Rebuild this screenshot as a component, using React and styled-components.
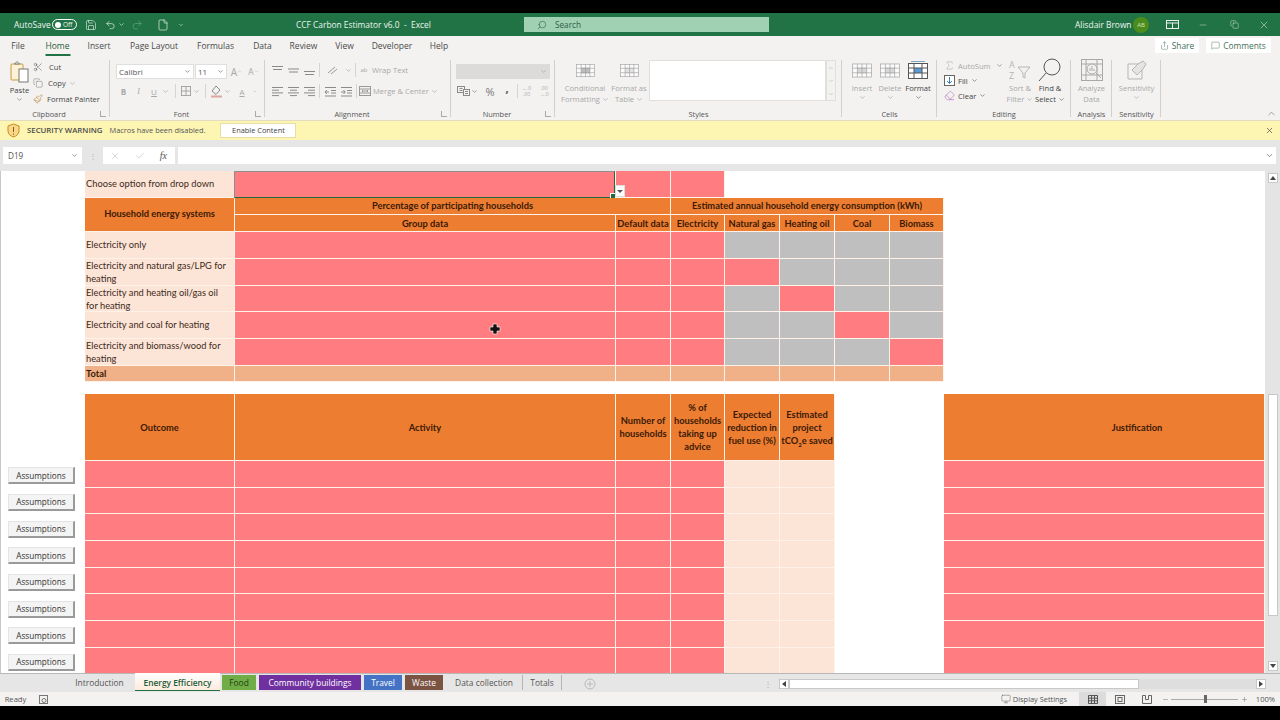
import React from "react";
import styled, { createGlobalStyle } from "styled-components";
import {
  Save, Undo2, Redo2, File, Search, Scissors, Copy, Paintbrush, X, Check, ChevronDown, ChevronUp,
  Minus, Plus, MessageSquare, Share, Sigma, Monitor, Eraser,
} from "lucide-react";

const ORANGE = "#ed7d31";
const PINK = "#ff7c80";
const PEACH = "#fce4d6";
const GREY = "#bfbfbf";
const TOTAL = "#f0b088";
const MUTED = "#a8a8a8";

const Global = createGlobalStyle`
  html, body { margin: 0; padding: 0; background: #000; }
  body { font-family: "Open Sans", "Liberation Sans", sans-serif; overflow: hidden; }
  * { box-sizing: border-box; }
`;

const Frame = styled.div`
  width: 1280px;
  height: 720px;
  padding: 13px 0 14px;
  display: flex;
  flex-direction: column;
  overflow: hidden;
`;

/* title bar */
const TitleBar = styled.div`
  height: 23px;
  background: #217346;
  color: #eef5f0;
  font-size: 8.4px;
  display: flex;
  align-items: center;
  position: relative;
  flex: none;
  white-space: nowrap;
`;
const TitleSlot = styled.div`
  width: ${(p) => p.$w}px;
  flex: none;
  display: flex;
  align-items: center;
  justify-content: ${(p) => p.$align || "center"};
  opacity: ${(p) => (p.$dim ? 0.35 : 1)};
`;
const Toggle = styled.div`
  width: 25px;
  height: 11px;
  border: 1px solid #fff;
  border-radius: 6px;
  font-size: 6.5px;
  display: flex;
  align-items: center;
  padding-left: 2px;
  gap: 2px;
  &::before {
    content: "";
    width: 6px;
    height: 6px;
    border-radius: 50%;
    background: #fff;
  }
`;
const SearchBox = styled.div`
  width: 245px;
  height: 15px;
  background: #a0d1b2;
  color: #2f5f45;
  display: flex;
  align-items: center;
  gap: 8px;
  padding-left: 13px;
  font-size: 8.2px;
`;
const Avatar = styled.div`
  width: 16px;
  height: 16px;
  border-radius: 50%;
  background: #4c8c1c;
  color: #cfe3bd;
  font-size: 6px;
  display: flex;
  align-items: center;
  justify-content: center;
`;

/* ribbon tabs */
const TabRow = styled.div`
  height: 21px;
  background: #f3f2f1;
  display: flex;
  align-items: center;
  flex: none;
  font-size: 8.5px;
  color: #444;
`;
const RibbonTab = styled.div`
  width: ${(p) => p.$w}px;
  flex: none;
  height: 21px;
  display: flex;
  align-items: center;
  justify-content: center;
  padding-bottom: 2px;
  position: relative;
  color: ${(p) => (p.$on ? "#1f5c3a" : "#4a4a4a")};
  &::after {
    content: "";
    display: ${(p) => (p.$on ? "block" : "none")};
    position: absolute;
    left: 50%;
    transform: translateX(-50%);
    bottom: 1px;
    width: 25px;
    height: 2px;
    background: #217346;
  }
`;
const ShareBtn = styled.div`
  height: 15px;
  width: ${(p) => p.$w}px;
  background: #fff;
  margin-left: ${(p) => p.$ml || 0}px;
  margin-bottom: 2px;
  display: flex;
  align-items: center;
  justify-content: center;
  gap: 3px;
  color: #3f6f55;
  font-size: 8.4px;
`;

/* ribbon */
const Ribbon = styled.div`
  height: 64px;
  background: #f3f2f1;
  display: flex;
  flex: none;
  position: relative;
  border-bottom: 1px solid #e3dcc0;
  font-size: 7.6px;
  color: ${MUTED};
  white-space: nowrap;
`;
const Group = styled.div`
  width: ${(p) => p.$w}px;
  flex: none;
  height: 64px;
  display: flex;
  flex-direction: column;
  position: relative;
  &::after {
    content: "";
    position: absolute;
    right: 0;
    top: 3px;
    bottom: 4px;
    width: 1px;
    background: #d2d0ce;
  }
`;
const GroupBody = styled.div`
  height: 50px;
  display: flex;
  padding-left: ${(p) => p.$pl || 0}px;
  padding-top: ${(p) => p.$pt || 0}px;
`;
const GroupLabel = styled.div`
  height: 13px;
  font-size: 7.4px;
  color: #555;
  display: flex;
  align-items: center;
  justify-content: center;
  position: relative;
  padding-right: ${(p) => p.$pr || 0}px;
`;
const Launcher = styled.span`
  position: absolute;
  right: 4px;
  top: 4px;
  width: 6px;
  height: 6px;
  border-left: 1px solid #aaa;
  border-bottom: 1px solid #aaa;
`;
const Stack = styled.div`
  display: flex;
  flex-direction: column;
  gap: ${(p) => p.$gap || 0}px;
  width: ${(p) => (p.$w ? `${p.$w}px` : "auto")};
  padding-top: ${(p) => p.$pt || 0}px;
  flex: none;
`;
const Row = styled.div`
  display: flex;
  align-items: center;
  height: ${(p) => p.$h || 16}px;
  gap: ${(p) => p.$gap || 0}px;
  color: ${(p) => p.$color || "inherit"};
`;
const Slot = styled.div`
  width: ${(p) => p.$w}px;
  flex: none;
  align-self: center;
  display: flex;
  align-items: center;
  justify-content: center;
  white-space: nowrap;
  font-weight: ${(p) => (p.$bold ? 700 : 400)};
  font-family: ${(p) => (p.$serif ? '"Liberation Serif", serif' : "inherit")};
  font-style: ${(p) => (p.$italic ? "italic" : "normal")};
  text-decoration: ${(p) => (p.$under ? "underline" : "none")};
  font-size: ${(p) => p.$fs || 8}px;
  color: ${(p) => p.$color || "inherit"};
`;
const Comma = styled.span`
  transform: translateY(-4px);
`;
const VRule = styled.div`
  width: 1px;
  height: 14px;
  background: #d6d4d2;
  flex: none;
`;
const Select = styled.div`
  width: ${(p) => p.$w}px;
  height: 15px;
  background: ${(p) => p.$bg || "#fff"};
  border: 1px solid ${(p) => p.$bg || "#e1dfdd"};
  color: #555;
  font-size: 8px;
  display: flex;
  align-items: center;
  justify-content: space-between;
  padding: 0 2px;
  margin-right: 1px;
`;
const Large = styled.div`
  width: ${(p) => p.$w}px;
  flex: none;
  display: flex;
  flex-direction: column;
  align-items: center;
  color: ${(p) => (p.$on ? "#444" : MUTED)};
  line-height: 11px;
  font-size: 7.6px;
  text-align: center;
`;
const LargeIcon = styled.div`
  height: 26px;
  display: flex;
  align-items: center;
  justify-content: center;
`;
const Line = styled.div`
  height: 11px;
  display: flex;
  align-items: center;
  justify-content: center;
  gap: 2px;
`;
const Gallery = styled.div`
  width: 177px;
  height: 41px;
  background: #fff;
  border: 1px solid #e1dfdd;
  margin-top: 3px;
  margin-left: -2px;
  flex: none;
`;
const GalleryBtns = styled.div`
  width: 10px;
  height: 41px;
  margin-top: 3px;
  border: 1px solid #e1dfdd;
  display: flex;
  flex-direction: column;
  align-items: center;
  justify-content: space-around;
  color: #aaa;
`;
const Decimal = styled.div`
  display: flex;
  flex-direction: column;
  font-size: 5px;
  line-height: 6px;
  text-align: center;
`;
const Collapse = styled.div`
  position: absolute;
  right: 3px;
  bottom: 1px;
  color: #666;
  display: flex;
`;

/* warning bar */
const Warning = styled.div`
  height: 19px;
  background: #fdf6b3;
  display: flex;
  align-items: center;
  padding: 0 6px 1px 7px;
  flex: none;
  font-size: 7.4px;
  color: #555;
`;
const WarnBold = styled.span`
  font-weight: 600;
  font-size: 7.8px;
  margin: 0 7px 0 7px;
  color: #4a4a4a;
`;
const EnableBtn = styled.div`
  width: 76px;
  height: 15px;
  margin-left: 15px;
  background: #fff;
  border: 1px solid #e6dfa8;
  display: flex;
  align-items: center;
  justify-content: center;
  color: #444;
`;
const WarnClose = styled.div`
  margin-left: auto;
  display: flex;
`;

/* formula bar */
const FormulaBar = styled.div`
  height: 31px;
  background: #e6e6e6;
  flex: none;
  display: flex;
  align-items: flex-start;
  padding: 7px 4px 0 3px;
  font-size: 8.2px;
  color: #555;
`;
const NameBox = styled.div`
  width: 79px;
  height: 17px;
  background: #fff;
  display: flex;
  align-items: center;
  justify-content: space-between;
  padding: 0 4px 0 5px;
`;
const Grip = styled.div`
  width: 21px;
  height: 17px;
  display: flex;
  align-items: center;
  justify-content: center;
  color: #aaa;
  font-size: 8px;
`;
const FxBox = styled.div`
  width: 72px;
  height: 17px;
  background: #fff;
  display: flex;
  align-items: center;
  justify-content: space-between;
  color: #aaa;
  padding: 0 8px 0 7px;
  margin-right: 3px;
`;
const FxText = styled.span`
  font-family: "Liberation Serif", serif;
  font-style: italic;
  color: #555;
  font-size: 10px;
`;
const FormulaInput = styled.div`
  flex: 1;
  height: 17px;
  background: #fff;
  display: flex;
  align-items: center;
  justify-content: flex-end;
  padding-right: 2px;
  color: #666;
`;

/* sheet */
const SheetWrap = styled.div`
  height: 502px;
  flex: none;
  background: #fff;
  display: flex;
  overflow: hidden;
  position: relative;
  box-shadow: inset 1px 0 #c8c8c8;
`;
const Grid = styled.div`
  width: 1265px;
  flex: none;
  display: grid;
  grid-template-columns: 85px 150px 381px 55px 54px 55px 55px 55px 54px 0 321px;
  grid-template-rows: 27px 17px 17px 27px 27px 26px 27px 27px 16px 12px 67px repeat(8, 26.67px);
  font-family: Lato, "Liberation Sans", sans-serif;
  font-size: 9.3px;
  line-height: 13px;
  color: #3c2a20;
`;
const tones = { orange: ORANGE, pink: PINK, peach: PEACH, grey: GREY, total: TOTAL, none: "transparent" };
const Cell = styled.div`
  grid-column: span ${(p) => p.$span || 1};
  grid-row: span ${(p) => p.$rows || 1};
  background: ${(p) => tones[p.$tone || "none"]};
  border-right: 1px solid ${(p) => (p.$tone && p.$tone !== "none" ? "#fff2e9" : "transparent")};
  border-bottom: 1px solid ${(p) => (p.$tone && p.$tone !== "none" ? "#fff2e9" : "transparent")};
  display: flex;
  align-items: center;
  justify-content: ${(p) => (p.$left ? "flex-start" : "center")};
  text-align: ${(p) => (p.$left ? "left" : "center")};
  padding-left: ${(p) => p.$pl || (p.$left ? 1 : 0)}px;
  padding-right: ${(p) => (p.$left ? 6 : 0)}px;
  padding-bottom: ${(p) => p.$pb || 0}px;
  font-weight: ${(p) => (p.$bold ? 700 : 400)};
  color: ${(p) => (p.$bold ? "#3a1a06" : "inherit")};
  position: relative;
  min-width: 0;
`;
const Spacer = styled.div`
  grid-column: 1 / -1;
`;
const Selection = styled.div`
  position: absolute;
  inset: 0 0 -1px -1px;
  border: 1px solid #1f6b40;
  border-left-color: #8e8e8e;
  border-top-color: #8e8e8e;
  &::after {
    content: "";
    position: absolute;
    right: -2px;
    bottom: -2px;
    width: 4px;
    height: 4px;
    background: #1f6b40;
    border: 1px solid #fff;
  }
`;
const DropBtn = styled.div`
  position: absolute;
  right: -11px;
  bottom: 0;
  width: 10px;
  height: 12px;
  background: #fff;
  border: 1px solid #ddd;
  display: flex;
  align-items: center;
  justify-content: center;
  z-index: 2;
  &::after {
    content: "";
    border-left: 3px solid transparent;
    border-right: 3px solid transparent;
    border-top: 3px solid #555;
  }
`;
const AssumeBtn = styled.div`
  width: 67px;
  height: 17px;
  margin: 4px 0 0 7px;
  background: #f4f4f4;
  border: 1px solid #e4e4e4;
  border-right: 2px solid #9a9a9a;
  border-bottom: 2px solid #9a9a9a;
  font-family: "Open Sans", sans-serif;
  font-size: 8.2px;
  color: #333;
  display: flex;
  align-items: center;
  justify-content: center;
`;
const Cursor = styled.svg`
  position: absolute;
  left: 489px;
  top: 152px;
`;
const VScroll = styled.div`
  width: 15px;
  flex: none;
  background: #e4e4e4;
  display: flex;
  flex-direction: column;
  justify-content: space-between;
  align-items: center;
  padding: 2px 0;
  position: relative;
`;
const ScrollBtn = styled.div`
  width: ${(p) => p.$w || 10}px;
  height: ${(p) => p.$h || 10}px;
  background: #fff;
  border: 1px solid #c8c8c8;
  display: flex;
  align-items: center;
  justify-content: center;
  flex: none;
  &::after {
    content: "";
    ${(p) => p.$dir === "up" && "border-left:3px solid transparent;border-right:3px solid transparent;border-bottom:4px solid #444;"}
    ${(p) => p.$dir === "down" && "border-left:3px solid transparent;border-right:3px solid transparent;border-top:4px solid #444;"}
    ${(p) => p.$dir === "left" && "border-top:3px solid transparent;border-bottom:3px solid transparent;border-right:4px solid #444;"}
    ${(p) => p.$dir === "right" && "border-top:3px solid transparent;border-bottom:3px solid transparent;border-left:4px solid #444;"}
  }
`;
const VThumb = styled.div`
  position: absolute;
  left: 3px;
  top: 223px;
  width: 10px;
  height: 222px;
  background: #fff;
  border: 1px solid #c8c8c8;
`;

/* sheet tabs */
const SheetTabs = styled.div`
  height: 19px;
  background: #e6e6e6;
  border-top: 1px solid #b8b8b8;
  flex: none;
  display: flex;
  align-items: flex-start;
  padding-top: 1px;
  font-size: 8.4px;
  color: #555;
`;
const SheetTab = styled.div`
  width: ${(p) => p.$w}px;
  margin-right: ${(p) => p.$mr ?? 3}px;
  margin-top: ${(p) => (p.$on ? -2 : 0)}px;
  height: ${(p) => (p.$on ? 18 : 15)}px;
  padding-top: ${(p) => (p.$on ? 1 : 0)}px;
  flex: none;
  display: flex;
  align-items: center;
  justify-content: center;
  background: ${(p) => (p.$on ? "linear-gradient(#fff, #fdeadd)" : p.$bg || "transparent")};
  color: ${(p) => (p.$on ? "#1d5c36" : p.$bg ? p.$fg || "#fff" : "#555")};
  font-weight: ${(p) => (p.$on ? 600 : 400)};
  border-bottom: ${(p) => (p.$on ? "1px solid #217346" : "none")};
  border-right: ${(p) => (p.$rule ? "1px solid #b5b5b5" : "none")};
`;
const HScroll = styled.div`
  width: 487px;
  height: 10px;
  align-self: center;
  display: flex;
  align-items: center;
  background: #dedede;
  position: relative;
`;
const HThumb = styled.div`
  width: 350px;
  height: 10px;
  background: #fff;
  border: 1px solid #c8c8c8;
`;
const HFill = styled.div`
  flex: 1;
`;

/* status bar */
const StatusBar = styled.div`
  height: 14px;
  background: #f3f2f1;
  flex: none;
  display: flex;
  align-items: center;
  font-size: 7.6px;
  color: #555;
`;
const ViewBtn = styled.div`
  width: 27px;
  height: 14px;
  flex: none;
  background: ${(p) => (p.$on ? "#dcdcdc" : "transparent")};
  display: flex;
  align-items: center;
  justify-content: center;
`;
const ZoomTrack = styled.div`
  width: 67px;
  height: 1px;
  background: #aaa;
  position: relative;
  flex: none;
`;
const ZoomKnob = styled.div`
  position: absolute;
  left: 33px;
  top: -4px;
  width: 3px;
  height: 8px;
  background: #666;
`;

/* small drawings */
const Caret = ({ color = "#999" }) => <ChevronDown size={7} color={color} strokeWidth={2} />;

const Lines = ({ kind = "left", color = "#8a8a8a" }) => {
  const sets = {
    left: [[1, 12], [1, 8], [1, 12], [1, 8]],
    center: [[1, 12], [3, 10], [1, 12], [3, 10]],
    right: [[1, 12], [5, 12], [1, 12], [5, 12]],
  };
  return (
    <svg width="13" height="11" viewBox="0 0 13 11" stroke={color} strokeWidth="1">
      {sets[kind].map(([a, b], i) => <line key={i} x1={a} x2={b} y1={1.5 + i * 2.7} y2={1.5 + i * 2.7} />)}
    </svg>
  );
};
const VLines = ({ top }) => (
  <svg width="13" height="11" viewBox="0 0 13 11" stroke="#8a8a8a">
    <line x1="1" x2="12" y1={top} y2={top} />
    <line x1="2" x2="11" y1={top + 3} y2={top + 3} />
  </svg>
);
const Indent = ({ flip }) => (
  <svg width="13" height="11" viewBox="0 0 13 11" stroke="#8a8a8a" fill="none">
    <path d="M1 1.5h11M7 4.5h5M7 7h5M1 10h11" />
    <path d={flip ? "M1 6h4M3.5 4l1.8 2-1.8 2" : "M5 6H1M2.8 4L1 6l1.8 2"} />
  </svg>
);
const SheetGlyph = ({ w = 26, h = 18, fill = "#cfcfcf", color = "#9a9a9a" }) => (
  <svg width={w} height={h} viewBox="0 0 26 18" fill="none" stroke={color} strokeWidth="0.8">
    <rect x="0.5" y="0.5" width="25" height="17" fill="#fafafa" />
    <rect x="7" y="5" width="12" height="8" fill={fill} stroke="none" />
    <path d="M0.5 6h25M0.5 12h25M7 0.5v17M13 0.5v17M19 0.5v17" />
  </svg>
);
const PasteIcon = () => (
  <svg width="20" height="24" viewBox="0 0 20 24" fill="none">
    <rect x="1" y="4" width="12" height="16" rx="1" fill="#fdf1d6" stroke="#c89b3c" />
    <path d="M4.5 4L7 1.5 9.5 4z" fill="#fff" stroke="#777" />
    <rect x="9" y="9" width="9" height="13" fill="#fff" stroke="#777" />
  </svg>
);
const Merge = () => (
  <svg width="12" height="10" viewBox="0 0 12 10" fill="none" stroke="#999">
    <rect x="0.5" y="0.5" width="11" height="9" />
    <path d="M0.5 3h11M0.5 7h11M3 5h6M3 5l1-1M3 5l1 1M9 5L8 4M9 5L8 6" />
  </svg>
);
const Borders = () => (
  <svg width="12" height="12" viewBox="0 0 12 12" fill="none" stroke="#9a9a9a">
    <rect x="0.5" y="0.5" width="11" height="11" />
    <path d="M6 0.5v11M0.5 6h11" />
  </svg>
);
const FillColor = () => (
  <svg width="13" height="13" viewBox="0 0 13 13" fill="none" stroke="#8a8a8a">
    <path d="M6 1L2 6l4 3.5L10 5z" />
    <rect x="1" y="10.5" width="11" height="2" fill="#d9a8a0" stroke="none" />
  </svg>
);
const Accounting = () => (
  <svg width="13" height="10" viewBox="0 0 13 10" fill="none" stroke="#8a8a8a">
    <rect x="0.5" y="0.5" width="7" height="6" />
    <rect x="6.5" y="3.5" width="6" height="6" fill="#f3f2f1" />
    <path d="M2.5 2.5h3M2.5 4.5h3M8 5.5h3M8 7.5h3" />
  </svg>
);
const Shield = () => (
  <svg width="13" height="15" viewBox="0 0 13 15">
    <path d="M6.5 1L12 3v5c0 3-2.5 5-5.5 6C3.5 13 1 11 1 8V3z" fill="#fbd78b" stroke="#c98a1a" />
    <path d="M6.5 4v5M6.5 10.5v1.2" stroke="#8a5a10" />
  </svg>
);
const Cross = () => (
  <svg width="13" height="9" viewBox="0 0 13 9" fill="none" stroke="#e8f1ec">
    <rect x="0.5" y="0.5" width="12" height="8" />
    <path d="M0.5 3h12M6.5 3v5.5" />
  </svg>
);
const ArrowSort = () => (
  <svg width="24" height="24" viewBox="0 0 24 24" fill="none" stroke="#b5b5b5">
    <path d="M10 9h12l-5 6v5l-2-1v-4z" />
    <text x="1" y="10" fontSize="9" fill="#b5b5b5" stroke="none">A</text>
    <text x="1" y="21" fontSize="9" fill="#b5b5b5" stroke="none">Z</text>
  </svg>
);
const Magnifier = () => (
  <svg width="24" height="24" viewBox="0 0 24 24" fill="none" stroke="#555">
    <circle cx="14" cy="9" r="8" />
    <path d="M8 15L1 23" />
  </svg>
);
const FormatGlyph = () => (
  <svg width="20" height="18" viewBox="0 0 20 18" fill="none" stroke="#555">
    <rect x="0.5" y="2.5" width="19" height="15" fill="#fff" />
    <rect x="6" y="7" width="8" height="5" fill="#5b9bd5" stroke="none" />
    <path d="M0.5 7h19M0.5 12h19M6 2.5v15M14 2.5v15" />
    <path d="M3 0.5h14" stroke="#7ba7c9" />
  </svg>
);
const AnalyzeGlyph = () => (
  <svg width="22" height="22" viewBox="0 0 22 22" fill="none" stroke="#a8a8a8">
    <rect x="0.5" y="0.5" width="21" height="21" />
    <path d="M0.5 5h21M0.5 16h21M5 0.5v21M16 0.5v21" />
    <circle cx="11" cy="10" r="5" fill="#f3f2f1" />
    <path d="M9 12V9M11 12V7M13 12v-2M15 14l5 5" />
  </svg>
);
const SensGlyph = () => (
  <svg width="20" height="20" viewBox="0 0 20 20" fill="none" stroke="#b5b5b5">
    <path d="M1 4h14v15H1z" />
    <path d="M5 10l6-6 5-3 3 3-3 5-6 6z" fill="#e4e4e4" />
  </svg>
);

const energy = [
  { label: "Electricity only", pink: -1 },
  { label: "Electricity and natural gas/LPG for heating", pink: 0 },
  { label: "Electricity and heating oil/gas oil for heating", pink: 1 },
  { label: "Electricity and coal for heating", pink: 2 },
  { label: "Electricity and biomass/wood for heating", pink: 3 },
];
const tabs = [
  ["File", 36], ["Home", 43, true], ["Insert", 40], ["Page Layout", 70], ["Formulas", 53], ["Data", 41],
  ["Review", 41], ["View", 41], ["Developer", 54], ["Help", 40],
];
const colored = [
  { name: "Food", w: 34, bg: "#70ad47", fg: "#1f3d10" },
  { name: "Community buildings", w: 102, bg: "#7030a0" },
  { name: "Travel", w: 38, bg: "#4472c4" },
  { name: "Waste", w: 38, bg: "#7a5343" },
];

const App = () => {
  return (
    <Frame>
      <Global />
      <TitleBar>
        <TitleSlot $w={14} />
        <TitleSlot $w={38} $align="flex-start">AutoSave</TitleSlot>
        <TitleSlot $w={25} $align="flex-start"><Toggle>Off</Toggle></TitleSlot>
        <TitleSlot $w={28}><Save size={12} strokeWidth={1.2} /></TitleSlot>
        <TitleSlot $w={11}><Undo2 size={12} strokeWidth={1.4} /></TitleSlot>
        <TitleSlot $w={10}><ChevronDown size={7} /></TitleSlot>
        <TitleSlot $w={22} $dim><Redo2 size={12} strokeWidth={1.4} /></TitleSlot>
        <TitleSlot $w={30}><File size={12} strokeWidth={1.3} /></TitleSlot>
        <TitleSlot $w={6}><ChevronDown size={8} /></TitleSlot>
        <TitleSlot $w={112} />
        <TitleSlot $w={125} $align="flex-start">CCF Carbon Estimator v6.0&nbsp; - &nbsp;Excel</TitleSlot>
        <TitleSlot $w={103} />
        <SearchBox><Search size={10} strokeWidth={1.4} style={{ transform: "scaleX(-1)" }} />Search</SearchBox>
        <TitleSlot $w={306} />
        <TitleSlot $w={58} $align="flex-start">Alisdair Brown</TitleSlot>
        <Avatar>AB</Avatar>
        <TitleSlot $w={15} />
        <TitleSlot $w={16}><Cross /></TitleSlot>
        <TitleSlot $w={15} />
        <TitleSlot $w={16}><Minus size={10} strokeWidth={1} /></TitleSlot>
        <TitleSlot $w={15} />
        <TitleSlot $w={16}><Copy size={9} strokeWidth={1.2} /></TitleSlot>
        <TitleSlot $w={14} />
        <TitleSlot $w={16}><X size={12} strokeWidth={1} /></TitleSlot>
      </TitleBar>

      <TabRow>
        {tabs.map(([t, w, on]) => <RibbonTab key={t} $w={w} $on={on}>{t}</RibbonTab>)}
        <TitleSlot $w={696} />
        <ShareBtn $w={44}><Share size={9} strokeWidth={1.2} />Share</ShareBtn>
        <ShareBtn $w={65} $ml={7}><MessageSquare size={9} strokeWidth={1.2} />Comments</ShareBtn>
      </TabRow>

      <Ribbon>
        <Group $w={110}>
          <GroupBody $pl={8} $pt={2}>
            <Large $w={23} $on>
              <LargeIcon><PasteIcon /></LargeIcon>
              <Line>Paste</Line>
              <Caret color="#666" />
            </Large>
            <Stack>
              <Row $h={16} $color="#444" $gap={4}><Slot $w={14}><Scissors size={10} strokeWidth={1.2} color="#555" /></Slot>Cut</Row>
              <Row $h={16} $color="#444" $gap={3}><Slot $w={14}><Copy size={10} strokeWidth={1.2} color="#777" /></Slot>Copy <Caret /></Row>
              <Row $h={16} $color="#444" $gap={2}><Slot $w={14}><Paintbrush size={10} strokeWidth={1.2} color="#b07a2a" /></Slot>Format Painter</Row>
            </Stack>
          </GroupBody>
          <GroupLabel $pr={12}>Clipboard<Launcher /></GroupLabel>
        </Group>

        <Group $w={155}>
          <GroupBody $pl={6} $pt={7}>
            <Stack $gap={4}>
              <Row $h={15}>
                <Select $w={78}>Calibri<Caret color="#555" /></Select>
                <Select $w={32}>11<Caret color="#555" /></Select>
                <Slot $w={17} $fs={10}>A<ChevronUp size={5} /></Slot>
                <Slot $w={17} $fs={8.5}>A<ChevronDown size={5} /></Slot>
              </Row>
              <Row $h={16}>
                <Slot $w={15} $bold>B</Slot>
                <Slot $w={15} $italic $serif>I</Slot>
                <Slot $w={16} $under>U</Slot>
                <Slot $w={7}><Caret /></Slot>
                <Slot $w={12}><VRule /></Slot>
                <Slot $w={10}><Borders /></Slot>
                <Slot $w={11}><Caret /></Slot>
                <Slot $w={6}><VRule /></Slot>
                <Slot $w={16}><FillColor /></Slot>
                <Slot $w={7}><Caret /></Slot>
                <Slot $w={22} $under>A</Slot>
                <Slot $w={4}><Caret /></Slot>
              </Row>
            </Stack>
          </GroupBody>
          <GroupLabel $pr={12}>Font<Launcher /></GroupLabel>
        </Group>

        <Group $w={186}>
          <GroupBody $pl={4} $pt={5}>
            <Stack $gap={5}>
              <Row $h={16}>
                <Slot $w={16}><VLines top={1.5} /></Slot>
                <Slot $w={16}><VLines top={4} /></Slot>
                <Slot $w={16}><VLines top={6.5} /></Slot>
                <Slot $w={5}><VRule /></Slot>
                <Slot $w={21}><svg width="12" height="11" viewBox="0 0 12 11" stroke="#999" fill="none"><path d="M1 8l7-6M4 9l6-5" /></svg></Slot>
                <Slot $w={10}><Caret /></Slot>
                <Slot $w={5}><VRule /></Slot>
                <Row $gap={2}><Slot $w={12} $fs={6}>ab</Slot>Wrap Text</Row>
              </Row>
              <Row $h={16}>
                <Slot $w={16}><Lines kind="left" /></Slot>
                <Slot $w={16}><Lines kind="center" /></Slot>
                <Slot $w={16}><Lines kind="right" /></Slot>
                <Slot $w={5}><VRule /></Slot>
                <Slot $w={16}><Indent /></Slot>
                <Slot $w={16}><Indent flip /></Slot>
                <Slot $w={5}><VRule /></Slot>
                <Row $gap={2}><Slot $w={12}><Merge /></Slot>Merge &amp; Center <Caret /></Row>
              </Row>
            </Stack>
          </GroupBody>
          <GroupLabel $pr={12}>Alignment<Launcher /></GroupLabel>
        </Group>

        <Group $w={104}>
          <GroupBody $pl={5} $pt={7}>
            <Stack $gap={4}>
              <Row $h={15}><Select $w={94} $bg="#dcdbda"><span /><Caret /></Select></Row>
              <Row $h={16}>
                <Slot $w={14}><Accounting /></Slot>
                <Slot $w={8}><Caret color="#666" /></Slot>
                <Slot $w={24} $fs={11} $color="#777">%</Slot>
                <Slot $w={10} $fs={13} $bold $color="#666"><Comma>,</Comma></Slot>
                <Slot $w={10}><VRule /></Slot>
                <Slot $w={9}><Decimal><span>←.0</span><span>.00</span></Decimal></Slot>
                <Slot $w={5} />
                <Slot $w={16}><Decimal><span>.00</span><span>→.0</span></Decimal></Slot>
              </Row>
            </Stack>
          </GroupBody>
          <GroupLabel $pr={12}>Number<Launcher /></GroupLabel>
        </Group>

        <Group $w={287}>
          <GroupBody $pl={8}>
            <Large $w={44}>
              <LargeIcon><SheetGlyph w={19} h={15} fill="#bdbdbd" /></LargeIcon>
              <Line>Conditional</Line>
              <Line>Formatting <Caret /></Line>
            </Large>
            <Large $w={44}>
              <LargeIcon><SheetGlyph w={19} h={15} fill="#e2e2e2" /></LargeIcon>
              <Line>Format as</Line>
              <Line>Table <Caret /></Line>
            </Large>
            <Gallery />
            <GalleryBtns><ChevronUp size={6} /><ChevronDown size={6} /><ChevronDown size={6} /></GalleryBtns>
          </GroupBody>
          <GroupLabel>Styles</GroupLabel>
        </Group>

        <Group $w={95}>
          <GroupBody $pl={6}>
            <Large $w={28}>
              <LargeIcon><SheetGlyph w={20} h={15} fill="#d8d8d8" /></LargeIcon>
              <Line>Insert</Line>
              <Caret />
            </Large>
            <Large $w={28}>
              <LargeIcon><SheetGlyph w={20} h={15} fill="#d8d8d8" /></LargeIcon>
              <Line>Delete</Line>
              <Caret />
            </Large>
            <Large $w={28} $on>
              <LargeIcon><FormatGlyph /></LargeIcon>
              <Line>Format</Line>
              <Caret color="#555" />
            </Large>
          </GroupBody>
          <GroupLabel>Cells</GroupLabel>
        </Group>

        <Group $w={134}>
          <GroupBody $pl={7}>
            <Stack $w={62} $pt={1}>
              <Row $h={15} $gap={3}><Sigma size={11} strokeWidth={1.2} />AutoSum&nbsp;<Caret color="#666" /></Row>
              <Row $h={15} $gap={3} $color="#444"><svg width="11" height="11" viewBox="0 0 11 11" fill="#fff" stroke="#666"><rect x="0.5" y="0.5" width="10" height="10" /><path d="M5.5 2v6M3 6l2.5 2.5L8 6" stroke="#2f7fc1" fill="none" /></svg>Fill <Caret color="#555" /></Row>
              <Row $h={15} $gap={3} $color="#444"><Eraser size={11} strokeWidth={1.2} color="#a560b0" />Clear <Caret color="#555" /></Row>
            </Stack>
            <Large $w={28}>
              <LargeIcon><ArrowSort /></LargeIcon>
              <Line>Sort &amp;</Line>
              <Line>Filter <Caret /></Line>
            </Large>
            <Large $w={32} $on>
              <LargeIcon><Magnifier /></LargeIcon>
              <Line>Find &amp;</Line>
              <Line>Select <Caret color="#555" /></Line>
            </Large>
          </GroupBody>
          <GroupLabel>Editing</GroupLabel>
        </Group>

        <Group $w={41}>
          <GroupBody>
            <Large $w={41}>
              <LargeIcon><AnalyzeGlyph /></LargeIcon>
              <Line>Analyze</Line>
              <Line>Data</Line>
            </Large>
          </GroupBody>
          <GroupLabel>Analysis</GroupLabel>
        </Group>

        <Group $w={49}>
          <GroupBody>
            <Large $w={49}>
              <LargeIcon><SensGlyph /></LargeIcon>
              <Line>Sensitivity</Line>
              <Caret />
            </Large>
          </GroupBody>
          <GroupLabel>Sensitivity</GroupLabel>
        </Group>
        <Collapse><ChevronUp size={11} strokeWidth={1.2} /></Collapse>
      </Ribbon>

      <Warning>
        <Shield />
        <WarnBold>SECURITY WARNING</WarnBold>
        Macros have been disabled.
        <EnableBtn>Enable Content</EnableBtn>
        <WarnClose><X size={9} strokeWidth={2} color="#555" /></WarnClose>
      </Warning>

      <FormulaBar>
        <NameBox>D19<Caret color="#555" /></NameBox>
        <Grip>⋮</Grip>
        <FxBox><X size={10} strokeWidth={1.2} /><Check size={10} strokeWidth={1.2} /><FxText>fx</FxText></FxBox>
        <FormulaInput><ChevronDown size={9} /></FormulaInput>
      </FormulaBar>

      <SheetWrap>
        <Grid>
          <Cell />
          <Cell $tone="peach" $left $pb={2}>Choose option from drop down</Cell>
          <Cell $tone="pink"><Selection><DropBtn /></Selection></Cell>
          <Cell $tone="pink" />
          <Cell $tone="pink" />
          <Cell $span={6} />

          <Cell />
          <Cell $tone="orange" $rows={2} $bold $pb={2}>Household energy systems</Cell>
          <Cell $tone="orange" $span={2} $bold $pb={2}>Percentage of participating households</Cell>
          <Cell $tone="orange" $span={5} $bold $pb={2}>Estimated annual household energy consumption (kWh)</Cell>
          <Cell $span={2} />

          <Cell />
          <Cell $tone="orange" $bold>Group data</Cell>
          <Cell $tone="orange" $bold>Default data</Cell>
          <Cell $tone="orange" $bold>Electricity</Cell>
          <Cell $tone="orange" $bold>Natural gas</Cell>
          <Cell $tone="orange" $bold>Heating oil</Cell>
          <Cell $tone="orange" $bold>Coal</Cell>
          <Cell $tone="orange" $bold>Biomass</Cell>
          <Cell $span={2} />

          {energy.map((row) => (
            <React.Fragment key={row.label}>
              <Cell />
              <Cell $tone="peach" $left $pb={row.label.length < 35 ? 2 : 0}>{row.label}</Cell>
              <Cell $tone="pink" />
              <Cell $tone="pink" />
              <Cell $tone="pink" />
              {[0, 1, 2, 3].map((i) => <Cell key={i} $tone={i === row.pink ? "pink" : "grey"} />)}
              <Cell $span={2} />
            </React.Fragment>
          ))}

          <Cell />
          <Cell $tone="total" $left $bold>Total</Cell>
          {[0, 1, 2, 3, 4, 5, 6].map((i) => <Cell key={i} $tone="total" />)}
          <Cell $span={2} />

          <Spacer />

          <Cell />
          <Cell $tone="orange" $bold>Outcome</Cell>
          <Cell $tone="orange" $bold>Activity</Cell>
          <Cell $tone="orange" $bold>Number of households</Cell>
          <Cell $tone="orange" $bold>% of households taking up advice</Cell>
          <Cell $tone="orange" $bold>Expected reduction in fuel use (%)</Cell>
          <Cell $tone="orange" $bold><span>Estimated project tCO<sub style={{ fontSize: 6, lineHeight: 0 }}>2</sub>e saved</span></Cell>
          <Cell $span={3} />
          <Cell $tone="orange" $bold $pl={66}>Justification</Cell>

          {[0, 1, 2, 3, 4, 5, 6, 7].map((r) => (
            <React.Fragment key={r}>
              <Cell $left><AssumeBtn>Assumptions</AssumeBtn></Cell>
              <Cell $tone="pink" />
              <Cell $tone="pink" />
              <Cell $tone="pink" />
              <Cell $tone="pink" />
              <Cell $tone="peach" />
              <Cell $tone="peach" />
              <Cell $span={3} />
              <Cell $tone="pink" />
            </React.Fragment>
          ))}
        </Grid>
        <VScroll>
          <ScrollBtn $dir="up" />
          <VThumb />
          <ScrollBtn $dir="down" />
        </VScroll>
        <Cursor width="12" height="12" viewBox="0 0 12 12">
          <path d="M4 1h4v3h3v4H8v3H4V8H1V4h3z" fill="#111" stroke="#fff" strokeWidth="0.6" />
        </Cursor>
      </SheetWrap>

      <SheetTabs>
        <Slot $w={64} />
        <SheetTab $w={71} $mr={0}>Introduction</SheetTab>
        <SheetTab $w={85} $on $mr={2}>Energy Efficiency</SheetTab>
        {colored.map((t) => <SheetTab key={t.name} $w={t.w} $bg={t.bg} $fg={t.fg}>{t.name}</SheetTab>)}
        <SheetTab $w={77} $mr={0} $rule>Data collection</SheetTab>
        <SheetTab $w={39} $mr={0} $rule>Totals</SheetTab>
        <Slot $w={56}><svg width="12" height="12" viewBox="0 0 12 12" fill="none" stroke="#bbb"><circle cx="6" cy="6" r="5" /><path d="M6 3v6M3 6h6" /></svg></Slot>
        <Slot $w={145} />
        <Slot $w={10} $color="#aaa">⋮</Slot>
        <Slot $w={6} />
        <HScroll>
          <ScrollBtn $dir="left" $w={10} />
          <HThumb />
          <HFill />
          <ScrollBtn $dir="right" $w={10} />
        </HScroll>
      </SheetTabs>

      <StatusBar>
        <Slot $w={31} $fs={7.6}>Ready</Slot>
        <Slot $w={24}><svg width="9" height="9" viewBox="0 0 9 9" fill="none" stroke="#777"><rect x="0.5" y="0.5" width="8" height="8" /><circle cx="5" cy="5.5" r="2" /></svg></Slot>
        <Slot $w={946} />
        <Slot $w={66} $fs={7.4}><Row $h={14} $gap={2}><Monitor size={10} strokeWidth={1.1} />Display Settings</Row></Slot>
        <Slot $w={12} />
        <ViewBtn $on><svg width="10" height="9" viewBox="0 0 10 9" fill="none" stroke="#555"><path d="M.5.5h9v8h-9zM.5 3.2h9M.5 5.8h9M3.5.5v8M6.5.5v8" /></svg></ViewBtn>
        <ViewBtn><svg width="10" height="9" viewBox="0 0 10 9" fill="none" stroke="#666"><rect x=".5" y=".5" width="9" height="8" /><rect x="3" y="2.5" width="4" height="4" /></svg></ViewBtn>
        <ViewBtn><svg width="10" height="9" viewBox="0 0 10 9" fill="none" stroke="#666"><path d="M.5 8.5V.5h3v4h3v-4h3v8z" /></svg></ViewBtn>
        <Slot $w={11}><Minus size={7} color="#888" /></Slot>
        <ZoomTrack><ZoomKnob /></ZoomTrack>
        <Slot $w={12}><Plus size={7} color="#888" /></Slot>
        <Slot $w={4} />
        <Slot $w={23} $fs={7.6}>100%</Slot>
      </StatusBar>
    </Frame>
  );
};

export default App;
